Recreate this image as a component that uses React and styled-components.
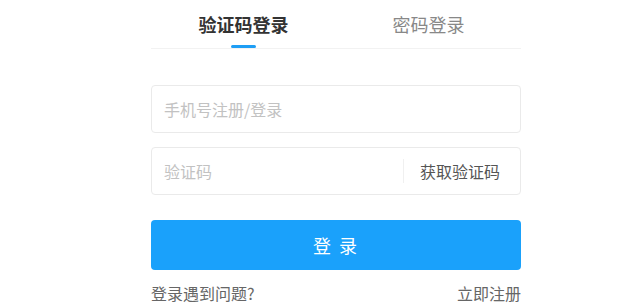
import React from 'react'
import styled, { createGlobalStyle } from 'styled-components'

const Global = createGlobalStyle`
body {
  margin: 0;
  background: #fff;
  font-family: "Noto Sans CJK SC", "Noto Sans", sans-serif;
}
`

const Wrap = styled.div`
width: 370px;
margin-left: 151px;
display: flex;
flex-direction: column;
`

const Tabs = styled.div`
display: flex;
border-bottom: 1px solid #f2f2f2;
`

const Tab = styled.div`
flex: 1;
position: relative;
height: 48px;
display: flex;
align-items: center;
justify-content: center;
font-size: 18px;
font-weight: ${p => (p.active ? 700 : 400)};
color: ${p => (p.active ? '#333' : '#888')};

&::after {
  content: '';
  display: ${p => (p.active ? 'block' : 'none')};
  position: absolute;
  bottom: 0;
  left: 50%;
  width: 25px;
  height: 3px;
  margin-left: -13px;
  border-radius: 2px;
  background: #1e9ef5;
}
`

const Field = styled.div`
display: flex;
align-items: center;
height: 46px;
margin-top: ${p => p.top}px;
border: 1px solid #eaeaea;
border-radius: 4px;
`

const Input = styled.input`
flex: 1;
min-width: 0;
height: 100%;
border: none;
outline: none;
background: transparent;
padding: 0 12px;
font-family: inherit;
font-size: 16px;
color: #333;

&::placeholder {
  color: #c2c2c2;
}
`

const CodeButton = styled.button`
height: 24px;
padding: 0 20px 0 16px;
border: none;
border-left: 1px solid #f0f0f0;
background: transparent;
font-family: inherit;
font-size: 16px;
color: #555;
`

const Submit = styled.button`
margin-top: 25px;
height: 50px;
border: none;
border-radius: 4px;
background: #1aa1fb;
color: #fff;
font-family: inherit;
font-size: 18px;
letter-spacing: 2px;
`

const Links = styled.div`
display: flex;
justify-content: space-between;
margin-top: 13px;
line-height: 20px;
font-size: 16px;
color: #666;
`

const App = () => {
  return (
    <>
      <Global />
      <Wrap>
        <Tabs>
          <Tab active>验证码登录</Tab>
          <Tab>密码登录</Tab>
        </Tabs>
        <Field top={36}>
          <Input placeholder='手机号注册/登录' />
        </Field>
        <Field top={14}>
          <Input placeholder='验证码' />
          <CodeButton>获取验证码</CodeButton>
        </Field>
        <Submit>登 录</Submit>
        <Links>
          <span>登录遇到问题?</span>
          <span>立即注册</span>
        </Links>
      </Wrap>
    </>
  )
}

export default App
